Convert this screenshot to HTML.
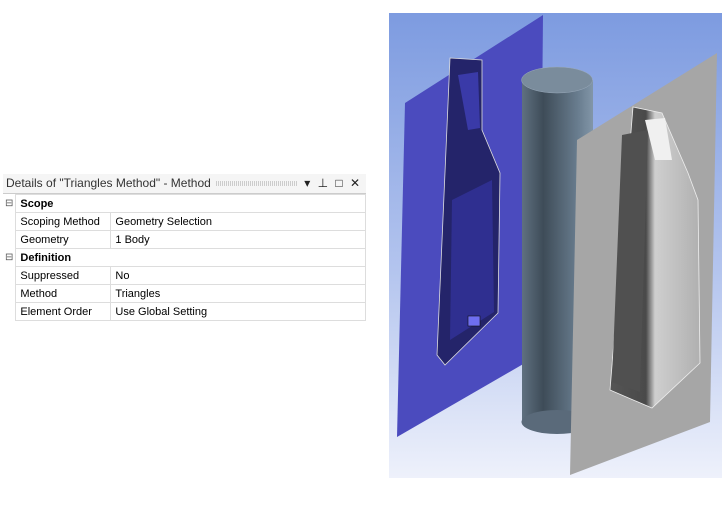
<!DOCTYPE html>
<html><head><style>
body{margin:0;width:728px;height:506px;background:#fff;position:relative;overflow:hidden;font-family:"Liberation Sans",Arial,sans-serif;}
.panel{position:absolute;left:3px;top:174px;width:363px;font-size:11.5px;color:#000;}
.hdr{height:19px;line-height:19px;border-bottom:1px solid #ccc;background:#f5f5f5;padding-left:3px;font-size:12px;color:#333;position:relative}
.hdr .dots{position:absolute;left:213px;top:7px;width:82px;height:5px;background:repeating-linear-gradient(90deg,#ccc 0 1px,transparent 1px 2px);}
.hdr .ic{position:absolute;right:4px;top:0;font-size:12px;letter-spacing:2px;color:#222}
table{border-collapse:collapse;width:363px;}
td{height:17px;padding:0 4px;border:1px solid #ddd;white-space:nowrap;font-size:11px}
td.e{border:none;width:3px;padding:0 2px;font-size:10px;color:#555}
</style></head><body>
<div class="panel">
<div class="hdr">Details of "Triangles Method" - Method<span class="dots"></span><span class="ic">▾ ⊥ □ ✕</span></div>
<table>
<tr><td class="e">⊟</td><td colspan="2"><b>Scope</b></td></tr>
<tr><td class="e"></td><td style="width:86px">Scoping Method</td><td>Geometry Selection</td></tr>
<tr><td class="e"></td><td>Geometry</td><td>1 Body</td></tr>
<tr><td class="e">⊟</td><td colspan="2"><b>Definition</b></td></tr>
<tr><td class="e"></td><td>Suppressed</td><td>No</td></tr>
<tr><td class="e"></td><td>Method</td><td>Triangles</td></tr>
<tr><td class="e"></td><td>Element Order</td><td>Use Global Setting</td></tr>
</table>
</div>
<svg style="position:absolute;left:0;top:0" width="728" height="506">
<defs>
<linearGradient id="bg" x1="0" y1="0" x2="0" y2="1"><stop offset="0" stop-color="#7d9be0"/><stop offset="0.55" stop-color="#b3c4ee"/><stop offset="1" stop-color="#eef1fb"/></linearGradient>
<linearGradient id="cyl" x1="0" y1="0" x2="1" y2="0"><stop offset="0" stop-color="#5f7080"/><stop offset="0.3" stop-color="#3e4c58"/><stop offset="0.8" stop-color="#6a7e90"/><stop offset="1" stop-color="#8296a8"/></linearGradient>
<linearGradient id="bot" x1="0" y1="0" x2="1" y2="0"><stop offset="0" stop-color="#555"/><stop offset="0.4" stop-color="#4a4a4a"/><stop offset="0.5" stop-color="#cfcfcf"/><stop offset="1" stop-color="#b0b0b0"/></linearGradient>
</defs>
<rect x="389" y="13" width="333" height="465" fill="url(#bg)"/>
<polygon points="405,103 543,15 540,340 525,363 397,437" fill="#4b4bbe"/>
<polygon points="450,58 482,60 482,130 500,173 498,313 445,365 437,355" fill="#24246a" stroke="#ddd" stroke-width="0.8"/>
<polygon points="458,75 478,72 480,128 468,130" fill="#3a3aa8"/>
<polygon points="452,200 492,180 494,312 450,340" fill="#2f2f90"/>
<rect x="468" y="316" width="12" height="10" fill="#6e6ef0" stroke="#111" stroke-width="0.6"/>
<rect x="522" y="80" width="71" height="343" fill="url(#cyl)"/>
<ellipse cx="557" cy="422" rx="35.5" ry="12" fill="#5a6a7a"/>
<ellipse cx="557" cy="80" rx="35.5" ry="13" fill="#7a8c9c" stroke="#9aaabb" stroke-width="0.5"/>
<polygon points="577,140 717,53 710,422 570,475" fill="#a6a6a6"/>
<path d="M633,107 L662,113 L688,173 L698,200 L700,363 L652,408 L610,390 Z" fill="url(#bot)" stroke="#eee" stroke-width="0.8"/>
<path d="M622,135 L648,130 L640,392 L612,382 Z" fill="#505050"/>
<path d="M645,120 L665,118 L672,160 L655,160 Z" fill="#f0f0f0"/>
</svg>
</body></html>
